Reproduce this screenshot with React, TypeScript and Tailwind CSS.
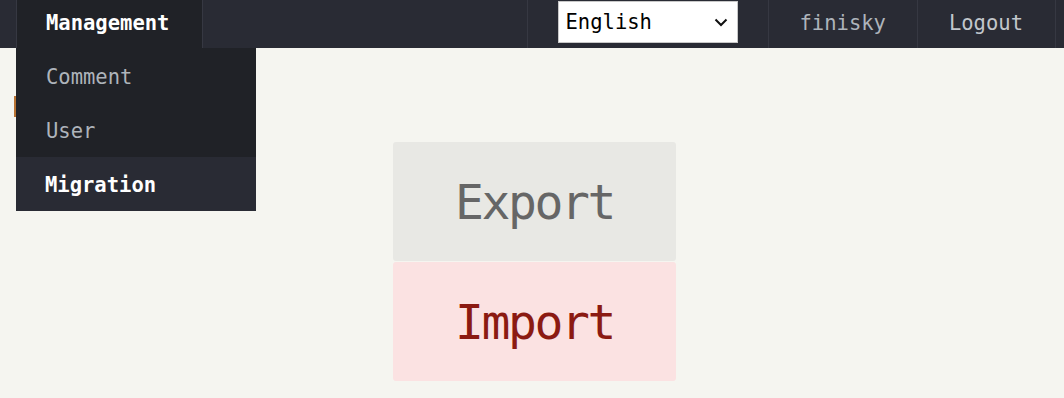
import React from "react";

const mono = { fontFamily: '"DejaVu Sans Mono", "Liberation Mono", monospace' };

export default function App() {
  return (
    <div className="relative min-h-[398px] w-full bg-[#f5f5f0]" style={mono}>
      <nav className="flex h-12 items-stretch bg-[#292b34] text-[20.5px]">
        <div className="ml-4 flex w-[187px] items-center border-x border-[#363842] bg-[#202227] pb-[1px] pl-[29px] font-bold text-white">
          Management
        </div>
        <div className="flex-1" />
        <div className="flex items-start border-l border-[#363842] pl-[30px] pr-[30px] pt-px">
          <div className="flex h-[42px] w-[180px] items-center justify-between border border-[#c8c8c8] bg-white pl-[7px] pr-[9px] text-black">
            <span>English</span>
            <svg width="14" height="9" viewBox="0 0 14 9" fill="none">
              <path d="M1.5 1.5 L7 7 L12.5 1.5" stroke="#111" strokeWidth="2" />
            </svg>
          </div>
        </div>
        <div className="flex items-center border-l border-[#363842] pb-[1px] pl-[31px] pr-[31px] text-[#aeb4bb]">
          finisky
        </div>
        <div className="flex items-center border-x border-[#363842] pb-[1px] pl-[31px] pr-[32px] text-[#c2c7cc]">
          Logout
        </div>
        <div className="w-2" />
      </nav>

      <div className="ml-[14px] mt-[48px] h-[21px] w-[3px] bg-[#b87333]" />

      <div className="ml-[393px] mt-[25px] flex w-[283px] flex-col gap-px">
        <div className="flex h-[119px] items-center justify-center rounded-[3px] bg-[#e8e8e4] text-[48px] tracking-[-2.4px] text-[#666]">
          Export
        </div>
        <div className="flex h-[119px] items-center justify-center rounded-[3px] bg-[#fbe2e2] text-[48px] tracking-[-2.4px] text-[#8b1a12]">
          Import
        </div>
      </div>

      <div className="absolute left-4 top-12 flex w-[240px] flex-col bg-[#202227] text-[20.5px]">
        <div className="flex h-[55px] items-center pl-[30px] pt-[3px] text-[#aeb4bb]">Comment</div>
        <div className="flex h-[54px] items-center pl-[30px] pt-[2px] text-[#aeb4bb]">User</div>
        <div className="flex h-[54px] items-center bg-[#292b34] pl-[29px] pt-[2px] font-bold text-white">Migration</div>
      </div>
    </div>
  );
}
